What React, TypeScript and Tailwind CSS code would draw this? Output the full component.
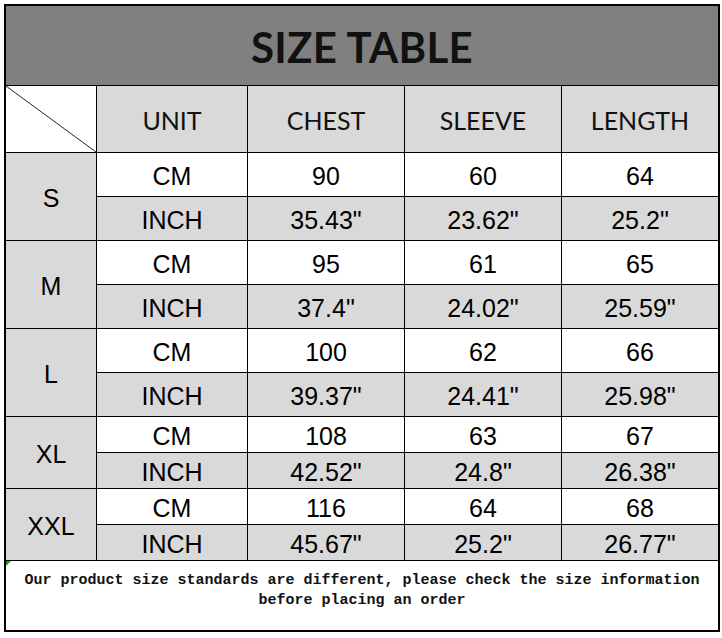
const sizes = [
  { name: "S", cm: ["90", "60", "64"], inch: ['35.43"', '23.62"', '25.2"'], tall: true },
  { name: "M", cm: ["95", "61", "65"], inch: ['37.4"', '24.02"', '25.59"'], tall: true },
  { name: "L", cm: ["100", "62", "66"], inch: ['39.37"', '24.41"', '25.98"'], tall: true },
  { name: "XL", cm: ["108", "63", "67"], inch: ['42.52"', '24.8"', '26.38"'], tall: false },
  { name: "XXL", cm: ["116", "64", "68"], inch: ['45.67"', '25.2"', '26.77"'], tall: false },
];

const headers = ["UNIT", "CHEST", "SLEEVE", "LENGTH"];

const cell = "flex items-center justify-center text-[25px] text-black font-['Liberation_Sans',Arial,sans-serif]";

export default function App() {
  return (
    <div className="w-[722px] h-[638px] bg-white pt-[4px] pl-[4px]">
      <div className="w-[716px] border-2 border-black">
        <div className="grid grid-cols-[90px_150px_156px_156px_156px] grid-rows-[79px_66px_repeat(6,43px)_repeat(4,35px)_69px] gap-px bg-black">
          {/* Title */}
          <div className="col-span-5 bg-[#808080] flex items-center justify-center pt-[3px]">
            <span className="text-[42px] font-bold text-[#111] font-['Lato',sans-serif] tracking-[0.3px]">SIZE TABLE</span>
          </div>

          {/* Header row */}
          <div className="bg-white">
            <svg width="90" height="66" className="block">
              <line x1="0" y1="0" x2="90" y2="66" stroke="#222" strokeWidth="1" />
            </svg>
          </div>
          {headers.map((h) => (
            <div key={h} className="bg-[#d9d9d9] flex items-center justify-center pt-[3px] text-[25px] text-[#111] font-['Lato',sans-serif]">
              {h}
            </div>
          ))}

          {/* Size rows */}
          {sizes.map((s) => {
            const pad = s.tall ? "pt-[5px]" : "pt-[4px]";
            return [
              <div key={s.name} className={`row-span-2 bg-[#d9d9d9] pt-[4px] ${cell}`}>
                {s.name}
              </div>,
              <div key={s.name + "-cm"} className={`bg-white ${cell} ${pad}`}>
                CM
              </div>,
              ...s.cm.map((v, i) => (
                <div key={s.name + "-cm-" + i} className={`bg-white ${cell} ${pad}`}>
                  {v}
                </div>
              )),
              <div key={s.name + "-in"} className={`bg-[#d9d9d9] ${cell} ${pad}`}>
                INCH
              </div>,
              ...s.inch.map((v, i) => (
                <div key={s.name + "-in-" + i} className={`bg-[#d9d9d9] ${cell} ${pad}`}>
                  {v}
                </div>
              )),
            ];
          })}

          {/* Footer note */}
          <div className="col-span-5 bg-white relative pt-[10px] text-center text-[15px] leading-[20px] font-bold text-[#111] font-['Liberation_Mono','Courier_New',monospace]">
            <div className="absolute left-0 top-0 w-0 h-0 border-t-[5px] border-t-[#2e8b2e] border-r-[5px] border-r-transparent" />
            Our product size standards are different, please check the size information
            <br />
            before placing an order
          </div>
        </div>
      </div>
    </div>
  );
}
